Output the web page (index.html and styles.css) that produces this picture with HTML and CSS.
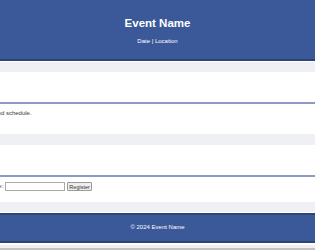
FILE: index.html
```
<!DOCTYPE html>
<html lang="en">
<head>
    <meta charset="UTF-8">
    <meta name="viewport" content="width=device-width, initial-scale=1.0">
    <title>Event Name</title>
    <link rel="stylesheet" href="styles.css">
</head>
<body>
    <header class="site-header">
        <h1>Event Name</h1>
        <p>Date | Location</p>
    </header>

    <main class="main">
        <section class="section">
            <div class="section-inner">
                <div class="section-head"></div>
                <p>View the agenda and schedule.</p>
            </div>
        </section>

        <section class="section">
            <div class="section-inner">
                <div class="section-head"></div>
                <form class="reg-form">
                    <label for="name">Enter your full name:</label>
                    <input type="text" id="name" name="name">
                    <button type="submit">Register</button>
                </form>
            </div>
        </section>
    </main>

    <footer class="site-footer">
        <p>&copy; 2024 Event Name</p>
    </footer>
    <div class="page-end"></div>
</body>
</html>
```

FILE: styles.css
```
html, body { margin: 0; padding: 0; }
body { font-family: "Liberation Sans", Arial, sans-serif; font-size: 6px; line-height: 7px; background: #eef0f3; color: #3a3a3a; overflow: hidden; }

.site-header { background: #3b5998; color: #fff; text-align: center; padding: 16px 0 14px; border-bottom: 2px solid #2c4478; box-shadow: 0 1px 0 #fff; }
.site-header h1 { margin: 0; font-size: 11.5px; line-height: 14px; font-weight: bold; }
.site-header p { margin: 8px 0 0; }

.main { padding: 11px 0; }
.section { background: #fff; margin-bottom: 11px; padding-bottom: 11px; }
.section:last-child { margin-bottom: 0; }
.section-inner { margin-left: -52px; }
.section-head { height: 30px; border-bottom: 2px solid #8b9bc5; }
.section p { margin: 6px 0; }

.reg-form { display: flex; align-items: center; gap: 2px; margin-top: 5px; }
.reg-form input { width: 60px; height: 9px; box-sizing: border-box; border: 1px solid #aaa; padding: 0 2px; font-size: 6px; }
.reg-form button { height: 9px; box-sizing: border-box; padding: 0 1px; border: 1px solid #999; border-radius: 1px; background: #efefef; color: #333; font-family: inherit; font-size: 5.5px; line-height: 6px; }

.site-footer { background: #3b5998; color: #fff; text-align: center; border-top: 2px solid #2c4478; border-bottom: 2px solid #2c4478; box-shadow: 0 -1px 0 #fff; }
.site-footer p { margin: 0; padding: 9px 0 10px; }

.page-end { height: 3px; border-top: 2px solid #fff; border-bottom: 2px solid #c4c4c4; }
```
